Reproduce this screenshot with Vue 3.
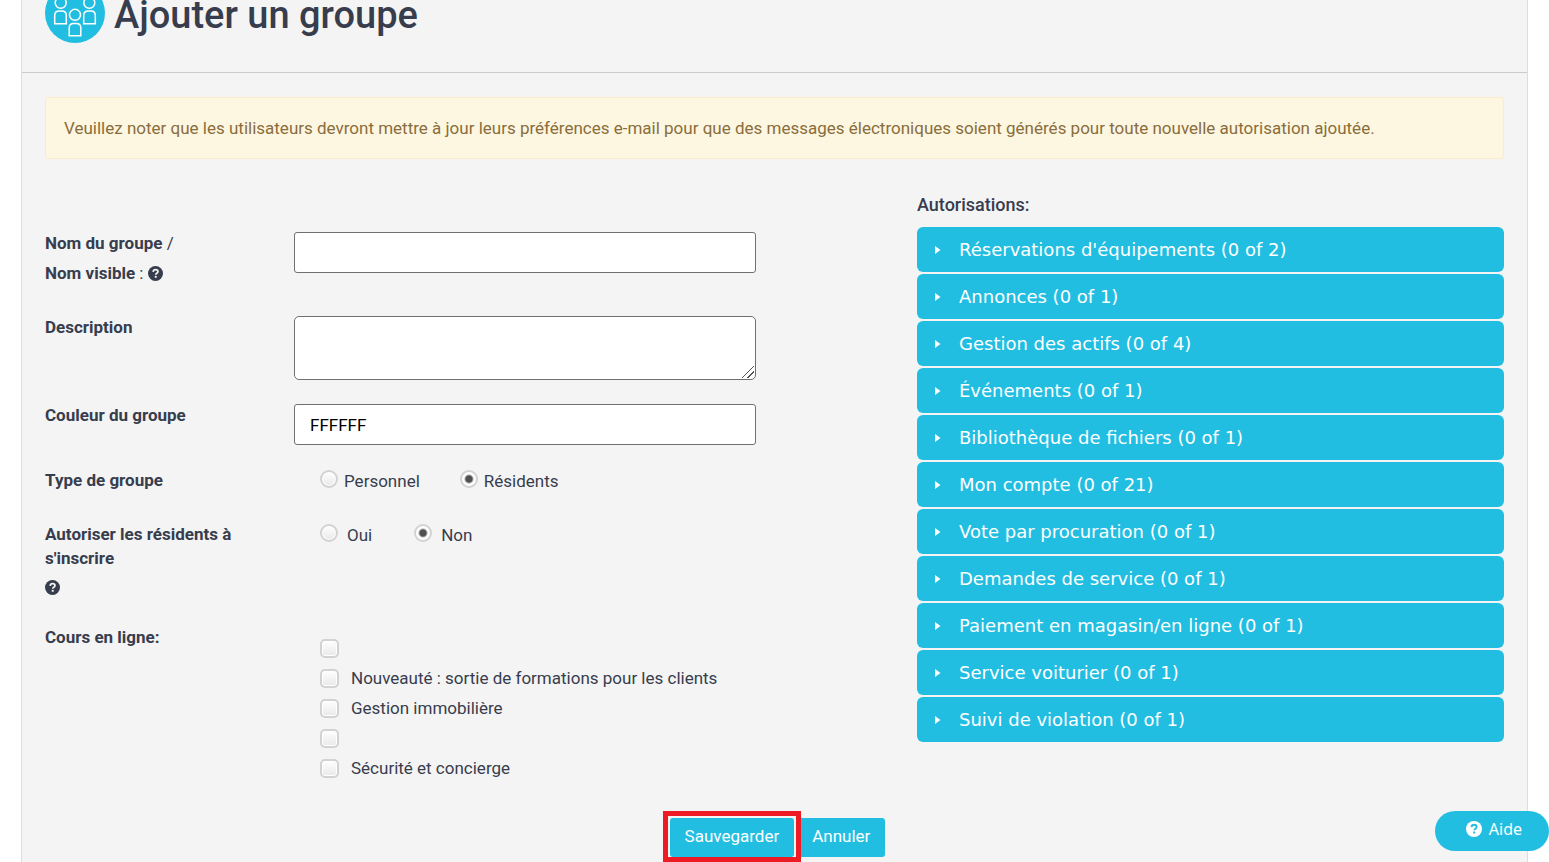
<template>
    <div class="page">
        <main class="panel">
            <header class="panelHeader">
                <svg class="groupIcon" viewBox="0 0 60 60" aria-hidden="true">
                    <circle cx="30" cy="30" r="30" fill="#21bee2" />
                    <g fill="none" stroke="#fff" stroke-width="1.5">
                        <circle cx="15.700" cy="19.800" r="5.500" />
                        <circle cx="44.300" cy="19.800" r="5.500" />
                        <circle cx="30" cy="31.800" r="5.500" />
                        <path d="M9.700 40.700v-8.200q0-4.500 4.500-4.500h2.600q4.500 0 4.500 4.500v8.200z" />
                        <path d="M38.700 40.700v-8.200q0-4.500 4.500-4.500h2.600q4.500 0 4.500 4.500v8.200z" />
                        <path d="M24.200 52.700v-7.700q0-4.500 4.500-4.500h2.600q4.500 0 4.500 4.500v7.700z" />
                    </g>
                </svg>
                <h1>Ajouter un groupe</h1>
            </header>

            <form class="content" @submit.prevent>
                <div class="notice">
                    Veuillez noter que les utilisateurs devront mettre à jour leurs préférences e-mail pour que des messages électroniques soient générés pour toute nouvelle autorisation ajoutée.
                </div>

                <div class="columns">
                    <div class="fields">
                        <div class="row nameRow">
                            <div class="label">
                                <label for="name">Nom du groupe <span class="light">/</span><br>Nom visible <span class="light">:</span></label>&nbsp;<svg class="help" viewBox="0 0 16 16" aria-hidden="true">
                                    <circle cx="8" cy="8" r="8" fill="currentColor" />
                                    <path d="M5.500 6.200q.2-2.400 2.600-2.400 2.500 0 2.500 2.100 0 1.200-1.300 1.900-1 .5-1 1.500" fill="none" stroke="#f4f4f4" stroke-width="1.900" />
                                    <rect x="7.200" y="10.500" width="2.100" height="2" fill="#f4f4f4" />
                                </svg>
                            </div>
                            <input id="name" v-model="group.name" class="textBox" type="text" />
                        </div>

                        <div class="row">
                            <label class="label" for="description">Description</label>
                            <textarea id="description" v-model="group.description" class="textBox"></textarea>
                        </div>

                        <div class="row">
                            <label class="label" for="color">Couleur du groupe</label>
                            <input id="color" v-model="group.color" class="textBox" type="text" />
                        </div>

                        <div class="row typeRow" role="radiogroup" aria-labelledby="typeLabel">
                            <div id="typeLabel" class="label">Type de groupe</div>
                            <div class="choices">
                                <label v-for="t in types" :key="t"><input v-model="group.type" type="radio" name="type" :value="t" />{{ t }}</label>
                            </div>
                        </div>

                        <div class="row" role="radiogroup" aria-labelledby="registerLabel">
                            <div class="label registerLabel">
                                <div id="registerLabel" class="registerText">Autoriser les résidents à s'inscrire</div>
                                <svg class="help" viewBox="0 0 16 16" aria-hidden="true">
                                    <circle cx="8" cy="8" r="8" fill="currentColor" />
                                    <path d="M5.500 6.200q.2-2.400 2.600-2.400 2.500 0 2.500 2.100 0 1.200-1.300 1.900-1 .5-1 1.500" fill="none" stroke="#f4f4f4" stroke-width="1.900" />
                                    <rect x="7.200" y="10.500" width="2.100" height="2" fill="#f4f4f4" />
                                </svg>
                            </div>
                            <div class="choices wide">
                                <label v-for="a in answers" :key="a"><input v-model="group.register" type="radio" name="register" :value="a" />{{ a }}</label>
                            </div>
                        </div>

                        <div class="row" role="group" aria-labelledby="coursesLabel">
                            <div id="coursesLabel" class="label">Cours en ligne:</div>
                            <div class="courses">
                                <label v-for="c in courses" :key="c.id"><input v-model="group.courses" type="checkbox" :value="c.id" />{{ c.name }}</label>
                            </div>
                        </div>
                    </div>

                    <section class="permissions">
                        <h2>Autorisations:</h2>
                        <button v-for="p in permissions" :key="p.name" type="button" class="permission">
                            <svg viewBox="0 0 6 8" aria-hidden="true"><path d="M0 0l5.500 4-5.500 4z" fill="#fff" /></svg>
                            {{ p.name }} (0 of {{ p.total }})
                        </button>
                    </section>
                </div>

                <div class="actions">
                    <div class="highlight">
                        <button type="submit" class="btn">Sauvegarder</button>
                    </div>
                    <button type="button" class="btn">Annuler</button>
                </div>
            </form>
        </main>

        <button type="button" class="helpButton">
            <svg viewBox="0 0 16 16" aria-hidden="true">
                <circle cx="8" cy="8" r="8" fill="#fff" />
                <path d="M5.500 6.200q.2-2.400 2.600-2.400 2.500 0 2.500 2.100 0 1.200-1.300 1.900-1 .5-1 1.500" fill="none" stroke="#21bee2" stroke-width="1.900" />
                <rect x="7.200" y="10.500" width="2.100" height="2" fill="#21bee2" />
            </svg>
            Aide
        </button>
    </div>
</template>

<script setup>
import { reactive } from 'vue'

const group = reactive({
    name: '',
    description: '',
    color: 'FFFFFF',
    type: 'Résidents',
    register: 'Non',
    courses: []
})

const types = ['Personnel', 'Résidents']
const answers = ['Oui', 'Non']

const courses = [
    { id: 1, name: '' },
    { id: 2, name: 'Nouveauté : sortie de formations pour les clients' },
    { id: 3, name: 'Gestion immobilière' },
    { id: 4, name: '' },
    { id: 5, name: 'Sécurité et concierge' }
]

const permissions = [
    { name: "Réservations d'équipements", total: 2 },
    { name: 'Annonces', total: 1 },
    { name: 'Gestion des actifs', total: 4 },
    { name: 'Événements', total: 1 },
    { name: 'Bibliothèque de fichiers', total: 1 },
    { name: 'Mon compte', total: 21 },
    { name: 'Vote par procuration', total: 1 },
    { name: 'Demandes de service', total: 1 },
    { name: 'Paiement en magasin/en ligne', total: 1 },
    { name: 'Service voiturier', total: 1 },
    { name: 'Suivi de violation', total: 1 }
]
</script>

<style>
body {
    margin: 0;
    background: #fff;
}
</style>

<style scoped>
.page {
    height: 100vh;
    overflow: hidden;
    font-family: Roboto, "Liberation Sans", sans-serif;
    font-size: 17px;
    line-height: 30px;
    color: #373d4d;
}

.page * {
    box-sizing: border-box;
}

.panel {
    margin: -17px 21px 0;
    min-height: calc(100vh + 17px);
    background: #f4f4f4;
    border: solid #ddd;
    border-width: 0 1px;
}

.panelHeader {
    display: flex;
    align-items: center;
    gap: 9px;
    padding: 0 23px 29px;
    border-bottom: 1px solid #ccc;
}

.groupIcon {
    width: 60px;
    height: 60px;
}

h1 {
    margin: 0;
    padding-top: 4px;
    font-size: 38px;
    line-height: 56px;
    font-weight: 500;
}

.content {
    padding: 24px 23px;
}

.notice {
    padding: 15px 18px;
    background: #fdf7e2;
    border: 1px solid #faebcc;
    border-radius: 4px;
    color: #8a6d3b;
}

.columns {
    display: grid;
    grid-template-columns: 872fr 587fr;
    padding-top: 31px;
}

.fields {
    display: flex;
    flex-direction: column;
    gap: 20px;
    padding-top: 38px;
}

.row {
    display: grid;
    grid-template-columns: 249fr 462fr 161fr;
    align-items: start;
}

.nameRow {
    min-height: 64px;
}

.typeRow {
    min-height: 34px;
}

.label {
    font-weight: 700;
}

.light {
    font-weight: 400;
}

.help {
    width: 15px;
    height: 15px;
    vertical-align: -2px;
}

.registerLabel {
    padding: 3px 40px 0 0;
}

.registerText {
    margin-bottom: 2px;
    line-height: 24px;
}

.textBox {
    width: 100%;
    height: 41px;
    margin: 4px 0 0;
    padding: 0 15px;
    border: 1px solid #707070;
    border-radius: 3px;
    background: #fff;
    color: #000;
    font: inherit;
}

textarea.textBox {
    display: block;
    height: 64px;
    border-radius: 5px;
    resize: vertical;
}

textarea.textBox::-webkit-resizer {
    background: linear-gradient(135deg, transparent 46%, #555 47% 53%, transparent 54% 68%, #555 69% 75%, transparent 76%) center / 12px 12px no-repeat;
}

.choices,
.courses {
    display: flex;
    padding-left: 26px;
}

.choices {
    gap: 40px;
    padding-top: 1px;
}

.choices.wide {
    gap: 42px;
}

.choices label,
.courses label {
    display: flex;
    align-items: center;
    height: 30px;
}

.choices label {
    gap: 6px;
}

.choices.wide label {
    gap: 9px;
}

.courses {
    flex-direction: column;
    padding-top: 11px;
}

.courses label {
    gap: 12px;
}

input[type="radio"],
input[type="checkbox"] {
    appearance: none;
    flex: none;
    width: 18px;
    height: 18px;
    margin: 0;
    border: 2px solid #d2d2d2;
    border-radius: 50%;
    background: linear-gradient(#fff, #e8e8e8);
    box-shadow: inset 0 0 0 1px #fff;
}

input[type="radio"] {
    margin-bottom: 4px;
}

input[type="radio"]:checked {
    background: radial-gradient(circle, #505050 0 3px, #fff 5px);
}

input[type="checkbox"] {
    width: 19px;
    height: 19px;
    border-radius: 5px;
}

.permissions {
    display: flex;
    flex-direction: column;
    gap: 2px;
}

h2 {
    margin: 0 0 5px;
    font-size: 18px;
    line-height: 30px;
    font-weight: 500;
}

.permission {
    display: flex;
    align-items: center;
    gap: 18px;
    height: 45px;
    padding: 0 18px;
    border: 0;
    border-radius: 6px;
    background: #21bee2;
    color: #fff;
    font-family: Verdana, "DejaVu Sans", sans-serif;
    font-size: 18px;
    cursor: pointer;
}

.permission svg {
    width: 6px;
    height: 8px;
}

.actions {
    display: flex;
    justify-content: center;
    gap: 3px;
    padding: 35px 0 0 6px;
}

.btn {
    height: 39px;
    padding: 0 15px 3px;
    border: 0;
    border-radius: 3px;
    background: #21bee2;
    color: #fff;
    font: inherit;
    cursor: pointer;
}

.highlight {
    position: relative;
    height: 39px;
}

.highlight::after {
    content: "";
    position: absolute;
    inset: -7px -7px -5px;
    border: 5px solid #ed1c24;
    pointer-events: none;
}

.helpButton {
    position: fixed;
    right: 0;
    bottom: 11px;
    display: flex;
    align-items: center;
    gap: 7px;
    height: 40px;
    padding: 0 27px 4px 31px;
    border: 0;
    border-radius: 20px;
    background: #21bee2;
    color: #fff;
    font-family: "Noto Sans", sans-serif;
    font-size: 16px;
    cursor: pointer;
}

.helpButton svg {
    width: 16px;
    height: 16px;
}
</style>
